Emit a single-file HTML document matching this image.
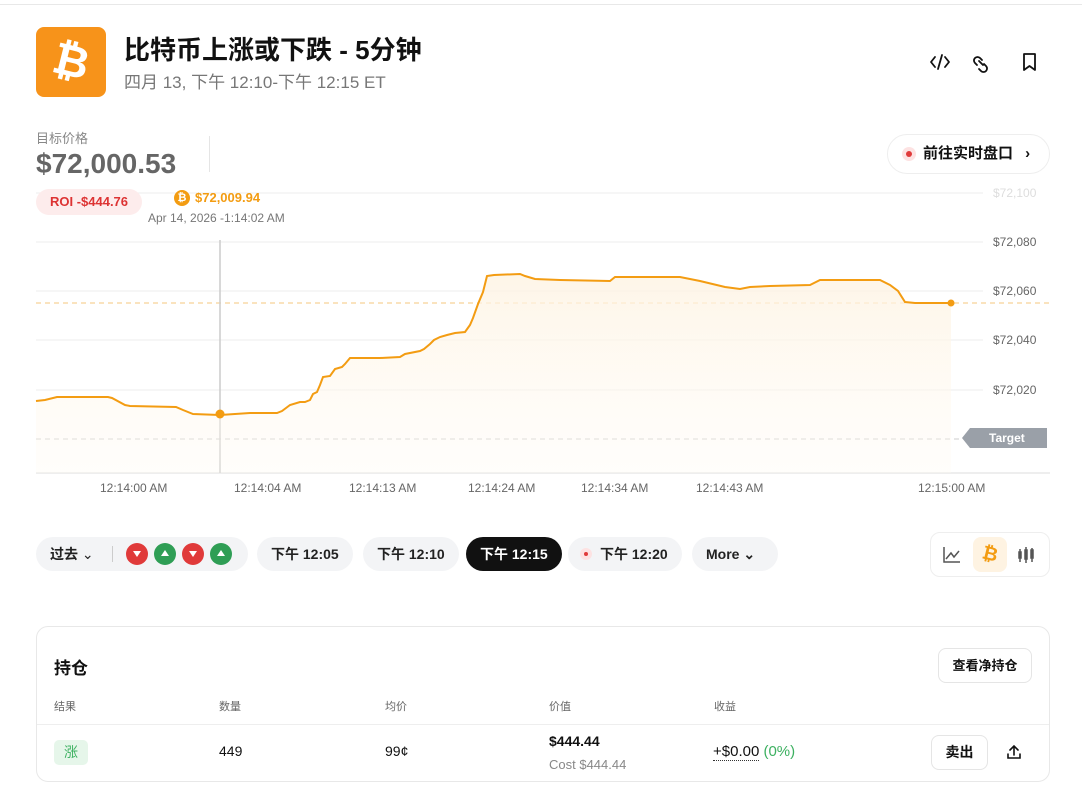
<!DOCTYPE html>
<html><head><meta charset="utf-8">
<style>
*{margin:0;padding:0;box-sizing:border-box}
body{width:1082px;height:797px;background:#fff;font-family:"Liberation Sans","Noto Sans CJK SC",sans-serif;color:#111;position:relative;overflow:hidden}
.a{position:absolute}
.pill{position:absolute;top:537px;height:34px;border-radius:17px;background:#f3f4f6;font-size:14px;font-weight:bold;line-height:34px;padding:0 14px;color:#222}
.ball{position:absolute;top:6px;width:22px;height:22px;border-radius:50%}
.ball i{position:absolute;left:7px;width:0;height:0;border-left:4px solid transparent;border-right:4px solid transparent}
.dn i{top:8px;border-top:6px solid #fff}
.up i{top:7px;border-bottom:6px solid #fff}
.hd{font-size:11px;color:#666;top:698px}
</style></head><body>
<div class="a" style="left:0;top:4px;width:1082px;height:1px;background:#e8e8e8"></div>
<div class="a" style="left:36px;top:27px;width:70px;height:70px;border-radius:8px;background:#f7931a"></div>
<div class="a" style="left:36px;top:27px;width:70px;height:70px;color:#fff;font-size:44px;font-weight:bold;text-align:center;line-height:70px;transform:rotate(14deg)">₿</div>
<div class="a" style="left:124px;top:30px;font-size:26px;font-weight:bold">比特币上涨或下跌 - 5分钟</div>
<div class="a" style="left:124px;top:68px;font-size:17px;color:#777">四月 13, 下午 12:10-下午 12:15 ET</div>
<svg class="a" style="left:928px;top:50px" width="120" height="24" fill="none" stroke="#111" stroke-width="1.8" stroke-linecap="round" stroke-linejoin="round">
<path d="M7 7l-4 5 4 5M17 7l4 5-4 5M14 5l-4 14"/>
<path d="M54 10l-2-2a3.5 3.5 0 0 0-5 5l2 2M56 14l2 2a3.5 3.5 0 0 1-5 5l-2-2M51 11l4 4"/>
<path d="M96 4h11v16l-5.5-4-5.5 4z"/>
</svg>
<div class="a" style="left:36px;top:128px;font-size:13px;color:#888">目标价格</div>
<div class="a" style="left:36px;top:148px;font-size:28px;font-weight:bold;color:#666">$72,000.53</div>
<div class="a" style="left:209px;top:136px;width:1px;height:36px;background:#e5e5e5"></div>
<div class="a" style="left:887px;top:134px;width:163px;height:40px;border:1px solid #eee;border-radius:20px;font-size:15px;font-weight:bold;line-height:38px;padding-left:35px">前往实时盘口 <span style="margin-left:8px">›</span>
<span class="a" style="left:14px;top:12px;width:14px;height:14px;border-radius:50%;background:#fde2e2"></span><span class="a" style="left:18px;top:16px;width:6px;height:6px;border-radius:50%;background:#e03a3a"></span></div>
<svg class="a" style="left:0;top:180px" width="1082" height="320">
<defs><linearGradient id="g" x1="0" y1="0" x2="0" y2="1"><stop offset="0" stop-color="#fef3e2" stop-opacity=".8"/><stop offset="1" stop-color="#fffaf2" stop-opacity=".3"/></linearGradient></defs>
<g stroke="#eee" stroke-width="1"><path d="M36 13H983M36 62H983M36 111H983M36 160H983M36 210H983"/></g>
<path d="M36 293H1050" stroke="#ddd"/>
<path d="M36 259H960" stroke="#ccc" stroke-dasharray="5 4"/>
<path d="M36 123H1050" stroke="#f5c77e" stroke-dasharray="5 4"/>
<path d="M220 60V293" stroke="#ccc" stroke-width="1.5"/>
<g transform="translate(0,-180)">
<path fill="url(#g)" d="M36 401L45 400L57 397L108 397L112 398L125 405L130 406L176 407L183 410L193 414L220 415L250 413L277 413L282 411L290 405L300 402L305 402L310 400L313 394L317 392L320 385L323 377L330 376L335 369L342 367L345 364L350 358L380 358L400 357L405 354L420 351L424 349L430 344L434 340L440 337L447 335L455 333L465 332L470 325L473 318L478 304L483 292L487 276L494 275L520 274L525 276L535 279L560 280L610 281L615 277L680 277L700 281L725 287L740 289L750 287L770 286L810 285L820 280L880 280L890 285L898 291L905 302L915 303L951 303V473H36Z"/>
<path fill="none" stroke="#f39c12" stroke-width="2" d="M36 401L45 400L57 397L108 397L112 398L125 405L130 406L176 407L183 410L193 414L220 415L250 413L277 413L282 411L290 405L300 402L305 402L310 400L313 394L317 392L320 385L323 377L330 376L335 369L342 367L345 364L350 358L380 358L400 357L405 354L420 351L424 349L430 344L434 340L440 337L447 335L455 333L465 332L470 325L473 318L478 304L483 292L487 276L494 275L520 274L525 276L535 279L560 280L610 281L615 277L680 277L700 281L725 287L740 289L750 287L770 286L810 285L820 280L880 280L890 285L898 291L905 302L915 303L951 303"/>
<circle cx="220" cy="414" r="4.5" fill="#f39c12"/><circle cx="951" cy="303" r="3.5" fill="#f39c12"/>
</g>
<g font-size="12" fill="#666" font-family="Liberation Sans,sans-serif"><text x="993" y="17" fill="#ddd">$72,100</text><text x="993" y="66">$72,080</text><text x="993" y="115">$72,060</text><text x="993" y="164">$72,040</text><text x="993" y="214">$72,020</text>
<text x="100" y="312">12:14:00 AM</text><text x="234" y="312">12:14:04 AM</text><text x="349" y="312">12:14:13 AM</text><text x="468" y="312">12:14:24 AM</text><text x="581" y="312">12:14:34 AM</text><text x="696" y="312">12:14:43 AM</text><text x="918" y="312">12:15:00 AM</text></g>
<path d="M970 248H1047V268H970L962 258Z" fill="#9aa0a8"/>
<text x="989" y="262" font-size="12" font-weight="bold" fill="#fff" font-family="Liberation Sans,sans-serif">Target</text>
</svg>
<div class="a" style="left:36px;top:189px;width:106px;height:26px;border-radius:13px;background:#fdecec;color:#d33;font-size:13px;font-weight:bold;line-height:26px;text-align:center">ROI -$444.76</div>
<div class="a" style="left:174px;top:190px;width:16px;height:16px;border-radius:50%;background:#f39c12;color:#fff;font-size:11px;text-align:center;line-height:16px;font-weight:bold">₿</div>
<div class="a" style="left:195px;top:190px;font-size:13px;color:#f39c12;font-weight:bold">$72,009.94</div>
<div class="a" style="left:148px;top:211px;font-size:12px;color:#777">Apr 14, 2026 -1:14:02 AM</div>

<div class="pill" style="left:36px;width:212px;padding-left:14px">过去 <span style="font-weight:normal">⌄</span>
<span class="a" style="left:76px;top:9px;width:1px;height:16px;background:#ccc"></span>
<span class="ball dn" style="left:90px;background:#e03a3a"><i></i></span><span class="ball up" style="left:118px;background:#2f9e55"><i></i></span><span class="ball dn" style="left:146px;background:#e03a3a"><i></i></span><span class="ball up" style="left:174px;background:#2f9e55"><i></i></span></div>
<div class="pill" style="left:257px">下午 12:05</div>
<div class="pill" style="left:363px">下午 12:10</div>
<div class="pill" style="left:466px;background:#111;color:#fff">下午 12:15</div>
<div class="pill" style="left:568px;padding-left:32px">下午 12:20<span class="a" style="left:12px;top:11px;width:12px;height:12px;border-radius:50%;background:#fde2e2"></span><span class="a" style="left:16px;top:15px;width:4px;height:4px;border-radius:50%;background:#e03a3a"></span></div>
<div class="pill" style="left:692px;width:86px">More ⌄</div>
<div class="a" style="left:930px;top:532px;width:120px;height:45px;border:1px solid #eee;border-radius:10px"></div>
<div class="a" style="left:973px;top:537px;width:34px;height:35px;border-radius:8px;background:#fef3e2"></div>
<div class="a" style="left:973px;top:537px;width:34px;height:35px;color:#f39c12;font-size:19px;font-weight:bold;text-align:center;line-height:35px;transform:rotate(14deg)">₿</div>
<svg class="a" style="left:942px;top:544px" width="100" height="22" fill="none" stroke="#555" stroke-width="1.5"><path d="M2 3V18H18M4 15l5-6 3 4 5-6"/><path d="M78 5v13M77 8h2v6h-2zM84 3v16M83 6h2v9h-2zM90 4v14M89 6h2v8h-2z"/></svg>

<div class="a" style="left:36px;top:626px;width:1014px;height:156px;border:1px solid #e8e8e8;border-radius:12px"></div>
<div class="a" style="left:54px;top:654px;font-size:17px;font-weight:bold">持仓</div>
<div class="a" style="left:938px;top:648px;width:94px;height:35px;border:1px solid #e5e5e5;border-radius:8px;font-size:13px;font-weight:bold;text-align:center;line-height:33px">查看净持仓</div>
<div class="a hd" style="left:54px">结果</div><div class="a hd" style="left:219px">数量</div><div class="a hd" style="left:385px">均价</div><div class="a hd" style="left:549px">价值</div><div class="a hd" style="left:714px">收益</div>
<div class="a" style="left:37px;top:724px;width:1012px;height:1px;background:#eee"></div>
<div class="a" style="left:54px;top:740px;width:34px;height:25px;border-radius:5px;background:#e6f6ea;color:#3cb060;font-size:14px;text-align:center;line-height:25px">涨</div>
<div class="a" style="left:219px;top:743px;font-size:14px">449</div>
<div class="a" style="left:385px;top:743px;font-size:14px">99¢</div>
<div class="a" style="left:549px;top:733px;font-size:14px;font-weight:bold">$444.44</div>
<div class="a" style="left:549px;top:757px;font-size:13px;color:#888">Cost $444.44</div>
<div class="a" style="left:713px;top:743px;font-size:15px"><span style="border-bottom:1.5px dotted #333">+$0.00</span> <span style="color:#3cb060">(0%)</span></div>
<div class="a" style="left:931px;top:735px;width:57px;height:35px;border:1px solid #e5e5e5;border-radius:8px;font-size:14px;font-weight:bold;text-align:center;line-height:33px">卖出</div>
<svg class="a" style="left:1005px;top:743px" width="18" height="18" fill="none" stroke="#111" stroke-width="1.6" stroke-linecap="round"><path d="M9 12V3M5 7l4-4 4 4M3 11v4h12v-4"/></svg>
</body></html>
